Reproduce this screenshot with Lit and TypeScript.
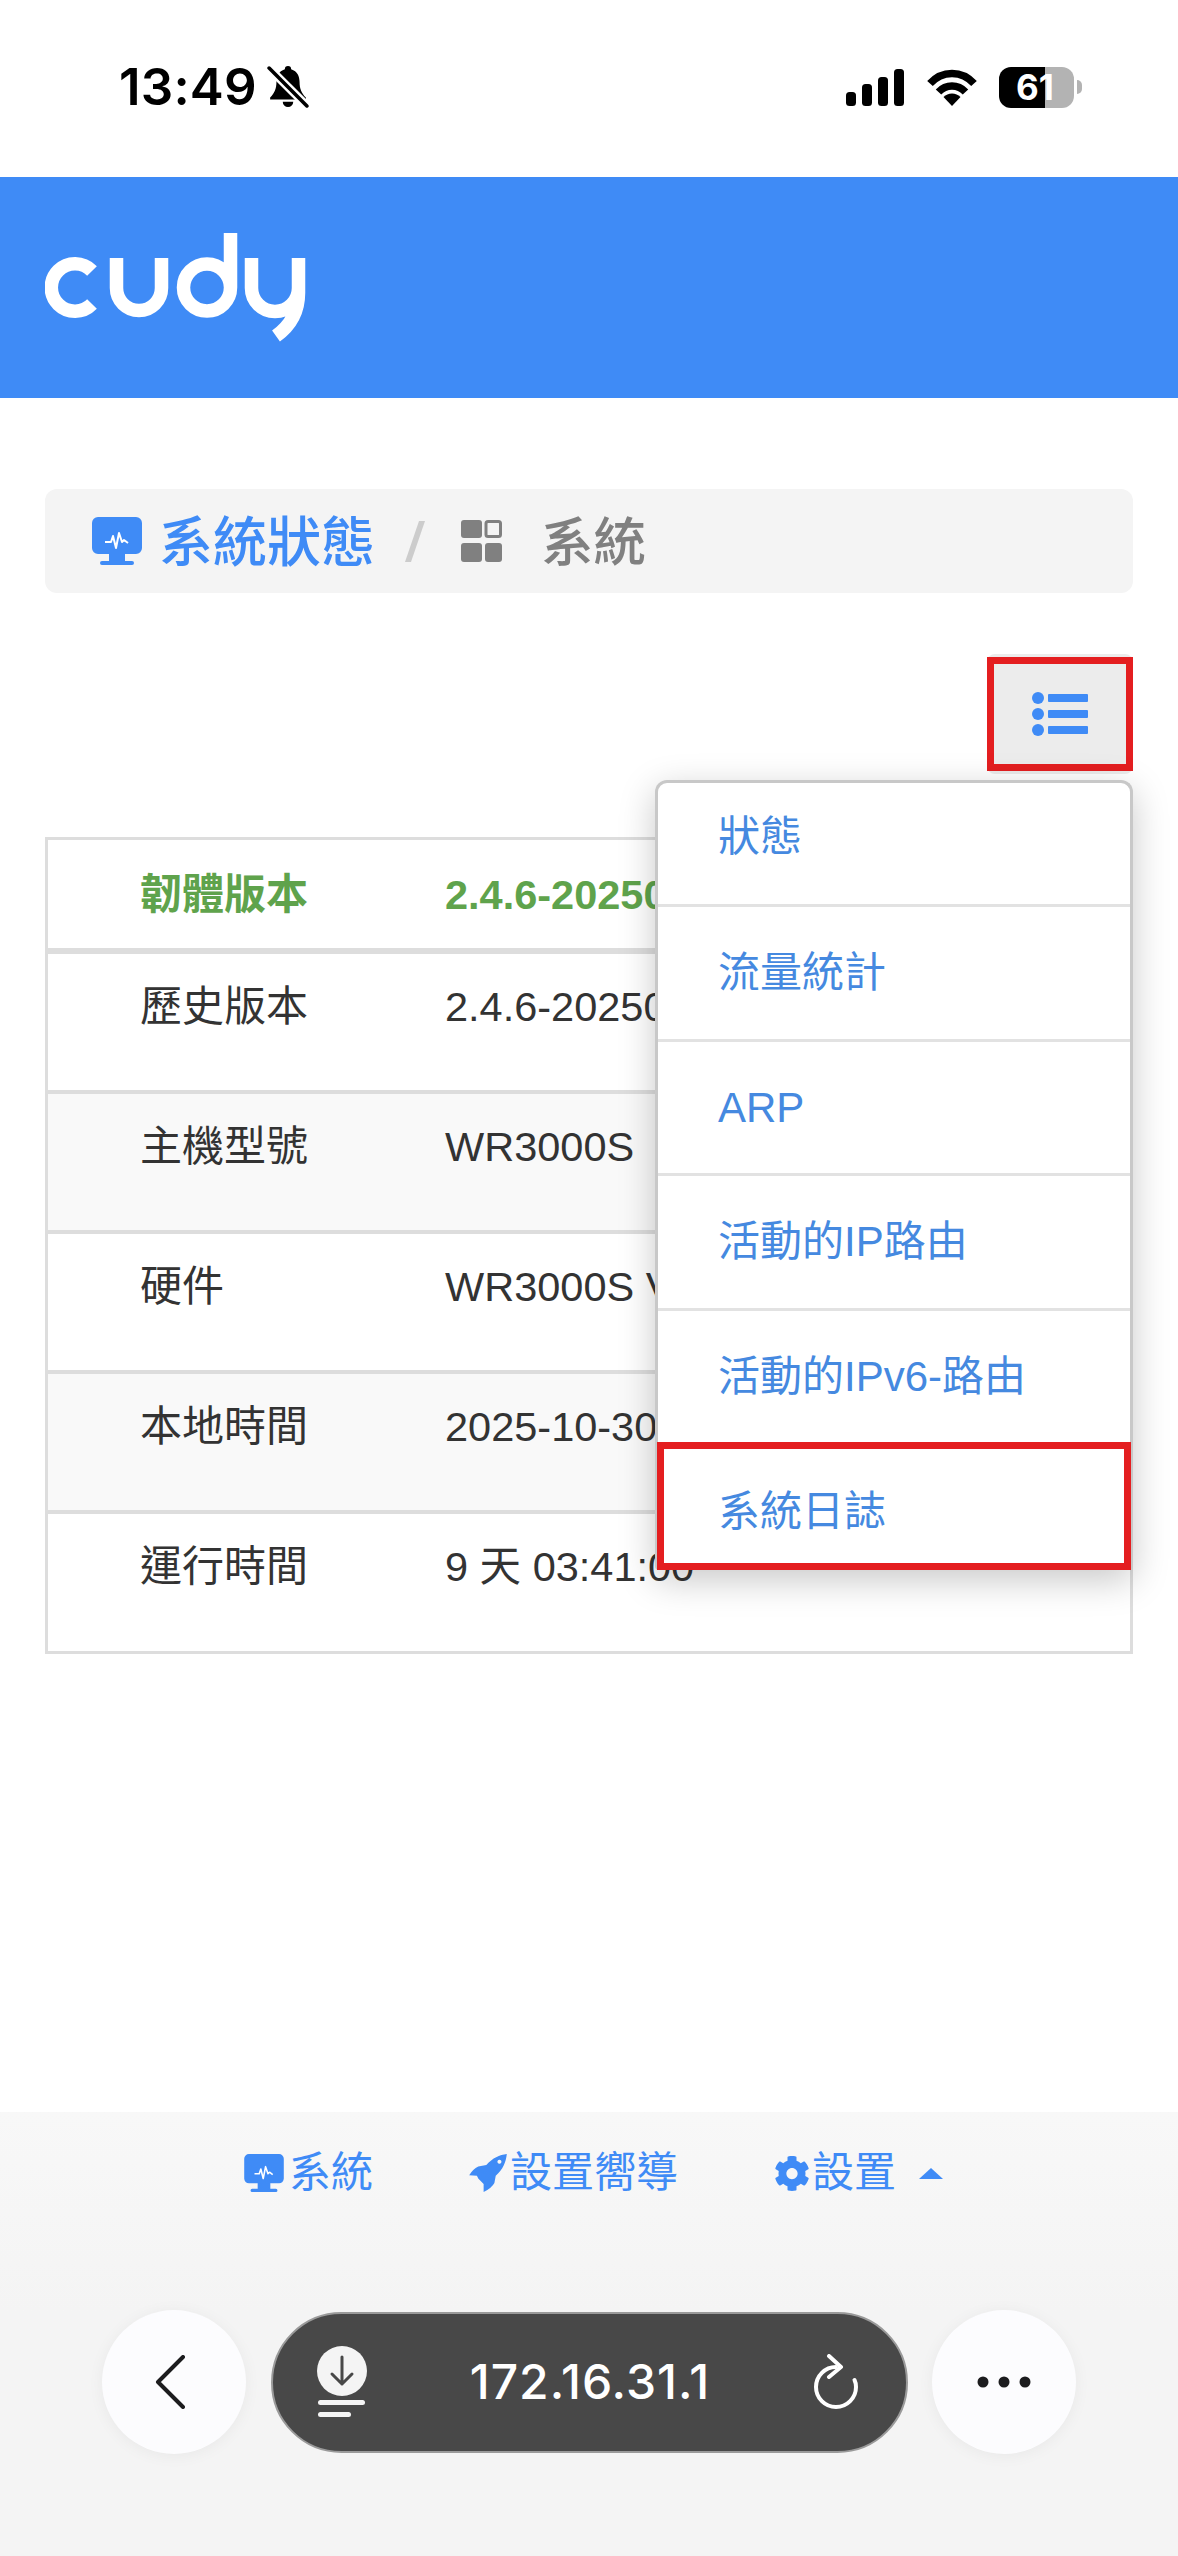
import { LitElement, html, css, svg } from "lit";
import { customElement } from "lit/decorators.js";

const rows: [string, string, string][] = [
  ["韌體版本", "2.4.6-20250", "first"],
  ["歷史版本", "2.4.6-20250", ""],
  ["主機型號", "WR3000S", "alt"],
  ["硬件", "WR3000S V", ""],
  ["本地時間", "2025-10-30", "alt"],
  ["運行時間", "9 天 03:41:00", ""],
];
const menu = ["狀態", "流量統計", "ARP", "活動的IP路由", "活動的IPv6-路由", "系統日誌"];

const monitor = svg`
  <path fill="currentColor" d="M6 0h38a6 6 0 0 1 6 6v25a6 6 0 0 1-6 6H33v7h7a2 2 0 0 1 0 4H10a2 2 0 0 1 0-4h7v-7H6a6 6 0 0 1-6-6V6a6 6 0 0 1 6-6z"/>
  <path fill="none" stroke="#fff" stroke-width="2" stroke-linejoin="round" d="M13 25h6l2-6 3 12 3-15 3 9 2-2 4 3"/>`;
const rocket = "M137 27C115 30 95 38 76 60L52 64Q36 72 25 90L48 92L52 100L68 116L68 140Q92 128 100 113L104 92C126 72 134 52 137 27ZM115 44a6 6 0 1 0 .01 0Z";
const cog = "M487.4 315.7l-42.6-24.6c4.3-23.2 4.3-47 0-70.2l42.6-24.6c4.9-2.8 7.1-8.6 5.5-14-11.1-35.6-30-67.8-54.7-94.6-3.8-4.1-10-5.1-14.8-2.3L380.8 110c-17.9-15.4-38.5-27.3-60.8-35.1V25.8c0-5.6-3.9-10.5-9.4-11.7-36.7-8.2-74.3-7.8-109.2 0-5.5 1.2-9.4 6.1-9.4 11.7V75c-22.2 7.9-42.8 19.8-60.8 35.1L88.7 85.5c-4.9-2.8-11-1.9-14.8 2.3-24.7 26.7-43.6 58.9-54.7 94.6-1.7 5.4.6 11.2 5.5 14L67.3 221c-4.3 23.2-4.3 47 0 70.2l-42.6 24.6c-4.9 2.8-7.1 8.6-5.5 14 11.1 35.6 30 67.8 54.7 94.6 3.8 4.1 10 5.1 14.8 2.3l42.6-24.6c17.9 15.4 38.5 27.3 60.8 35.1v49.2c0 5.6 3.9 10.5 9.4 11.7 36.7 8.2 74.3 7.8 109.2 0 5.5-1.2 9.4-6.1 9.4-11.7v-49.2c22.2-7.9 42.8-19.8 60.8-35.1l42.6 24.6c4.9 2.8 11 1.9 14.8-2.3 24.7-26.7 43.6-58.9 54.7-94.6 1.5-5.5-.7-11.3-5.6-14.1zM256 336c-44.1 0-80-35.9-80-80s35.9-80 80-80 80 35.9 80 80-35.9 80-80 80z";

@customElement("app-root")
export class AppRoot extends LitElement {
  static styles = css`
    :host {
      display: flex;
      flex-direction: column;
      width: 1178px;
      height: 2556px;
      overflow: hidden;
      background: #fff;
      color: #333;
      font-family: "Liberation Sans", "Noto Sans CJK TC", sans-serif;
      font-size: 41.5px;
    }
    svg { display: block; flex: none; }
    .status {
      height: 177px;
      box-sizing: border-box;
      display: flex;
      align-items: center;
      padding: 0 96px 3px 119px;
      color: #000;
      font-family: Inter, "Liberation Sans", sans-serif;
    }
    .time { font-size: 51px; font-weight: 600; letter-spacing: 0.2px; line-height: 60px; }
    .bell { margin-left: 10px; }
    .status-right { margin-left: auto; display: flex; align-items: center; }
    .wifi { margin-left: 23px; }
    .battery {
      margin-left: 22px;
      width: 75px;
      height: 41px;
      border-radius: 12px;
      background: linear-gradient(90deg, #000 61%, #b3b3b3 61%);
      color: #fff;
      font-size: 35px;
      font-weight: 700;
      line-height: 41px;
      text-align: left;
      padding-left: 17px;
      box-sizing: border-box;
    }
    .cap { width: 5px; height: 14px; margin-left: 3px; background: #b3b3b3; border-radius: 0 7px 7px 0; }
    .brand {
      height: 221px;
      box-sizing: border-box;
      background: #3f8bf6;
      padding: 56px 0 0 45px;
    }
    .brand svg { filter: blur(0.7px); }
    main { flex: 1; padding: 91px 45px 0; min-height: 0; }
    .crumb {
      height: 104px;
      background: #f4f4f4;
      border-radius: 12px;
      display: flex;
      align-items: center;
      padding: 0 0 0 47px;
      font-size: 54px;
      font-weight: 500;
      line-height: 60px;
      color: #3f8bf6;
    }
    .crumb span { position: relative; top: 2px; }
    .crumb .lead { margin-left: 17px; }
    .slash { width: 20px; margin-left: 30px; color: #ccc; }
    .squares { margin-left: 36px; color: #808080; }
    .crumb .sys { margin-left: 39px; font-size: 52.5px; color: #808080; }
    .toolbar {
      position: relative;
      margin-top: 61px;
      height: 120px;
      display: flex;
      justify-content: flex-end;
    }
    .menu-btn {
      width: 146px;
      height: 120px;
      border-radius: 8px;
      background: #ececec;
      display: flex;
      align-items: center;
      justify-content: center;
      position: relative;
    }
    .mark {
      position: absolute;
      box-sizing: border-box;
      border: 7px solid #e41e20;
      pointer-events: none;
    }
    .mark-btn { left: 0; right: 0; top: 3px; bottom: 3px; }
    .menu {
      position: absolute;
      z-index: 2;
      top: 126px;
      right: 0;
      width: 478px;
      box-sizing: border-box;
      background: #fff;
      border: 3px solid #c8c8c8;
      border-bottom: 0;
      border-radius: 12px 12px 4px 4px;
      box-shadow: 0 10px 36px rgba(0, 0, 0, 0.22);
      color: #4589e0;
      font-size: 42px;
    }
    .item {
      position: relative;
      box-sizing: border-box;
      height: 134.7px;
      padding: 36px 0 0 60px;
      line-height: 60px;
      border-bottom: 3px solid #e2e2e2;
    }
    .item:first-child { height: 124px; padding-top: 24px; }
    .item:last-child { height: 124px; border-bottom: 0; }
    .mark-item { left: -1px; right: -1px; top: -4px; bottom: 0; }
    .table {
      margin-top: 63px;
      border: 3px solid #ddd;
    }
    .row {
      display: grid;
      grid-template-columns: 305px 1fr;
      box-sizing: border-box;
      height: 140px;
      padding: 23px 0 0 92px;
      line-height: 60px;
      border-bottom: 4px solid #ddd;
      white-space: nowrap;
    }
    .row .key { font-size: 42px; }
    .row:last-child { border-bottom: 0; height: 137px; }
    .row.alt { background: #f9f9f9; }
    .row.first {
      height: 114px;
      padding-top: 25px;
      border-bottom-width: 6px;
      color: #5fa34c;
      font-weight: 700;
    }
    footer {
      height: 444px;
      box-sizing: border-box;
      background: linear-gradient(#f8f8f8, #f4f4f4 45%);
      color: #3f8bf6;
    }
    nav {
      height: 198px;
      box-sizing: border-box;
      display: flex;
      align-items: flex-start;
      padding: 31px 0 0 244px;
      font-size: 42px;
      line-height: 60px;
      gap: 96px;
    }
    .link { display: flex; align-items: center; gap: 5px; }
    .link.rocket { gap: 3px; }
    .link.gear { gap: 2px; }
    .caret {
      margin-left: 21px;
      width: 0;
      height: 0;
      border: 12.5px solid transparent;
      border-top: 0;
      border-bottom: 11px solid #3f8bf6;
    }
    .bar { display: flex; align-items: center; padding-left: 102px; }
    .round {
      width: 144px;
      height: 144px;
      border-radius: 50%;
      background: #fcfcfe;
      box-shadow: 0 2px 16px rgba(0, 0, 0, 0.05);
      display: flex;
      align-items: center;
      justify-content: center;
      flex: none;
    }
    .back svg { margin-right: 8px; }
    .pill {
      width: 637px;
      height: 141px;
      margin: 0 24px 0 25px;
      box-sizing: border-box;
      border-radius: 71px;
      background: #484848;
      border: 2px solid #9a9a9a;
      display: flex;
      align-items: center;
      padding: 0 47px 0 44px;
      color: #fff;
      font-family: Inter, "Liberation Sans", sans-serif;
    }
    .addr { flex: 1; text-align: center; font-size: 48px; font-weight: 500; letter-spacing: 1px; line-height: 60px; }
  `;

  render() {
    return html`
      <div class="status">
        <span class="time">13:49</span>
        <svg class="bell" width="42" height="42" viewBox="0 0 40 40">
          <path fill="#000" d="M20 0a3 3 0 0 1 3 3c6 2 8 7 8 12 0 7 2 11 6 15v2H3v-2c4-4 6-8 6-15 0-5 2-10 8-12a3 3 0 0 1 3-3zM15 34h10a5 5 0 0 1-10 0z"/>
          <path stroke="#fff" stroke-width="8" d="M1 1l38 38"/>
          <path stroke="#000" stroke-width="3.4" stroke-linecap="round" d="M2 2l36 36"/>
        </svg>
        <div class="status-right">
          <svg width="58" height="37" viewBox="0 0 58 37" fill="#000">
            <rect x="0" y="23" width="10" height="14" rx="3.5"/>
            <rect x="16" y="15" width="10" height="22" rx="3.5"/>
            <rect x="32" y="8" width="10" height="29" rx="3.5"/>
            <rect x="48" y="0" width="10" height="37" rx="3.5"/>
          </svg>
          <svg class="wifi" width="50" height="37" viewBox="0 0 50 37">
            <path fill="none" stroke="#000" stroke-width="7.5" d="M3 14.500C15 1 35 1 47 14.500M11.500 23C19 15 31 15 38.500 23"/>
            <path fill="#000" d="M25 37l-8.500-9a12 12 0 0 1 17 0z"/>
          </svg>
          <div class="battery">61</div>
          <div class="cap"></div>
        </div>
      </div>

      <div class="brand">
        <svg width="262" height="110" viewBox="0 0 262 110" fill="none" stroke="#fff" stroke-width="13.500">
          <path d="M47 38A23.700 23.700 0 1 0 47 71"/>
          <path d="M71.500 25V55A22.500 22.500 0 0 0 116.500 55V25"/>
          <path d="M185.500 0V54.500A23.500 23.500 0 1 1 138.500 54.500A23.500 23.500 0 1 1 185.500 54.500"/>
          <path d="M206.500 25V55A23.500 23.500 0 0 0 253.500 55M253.500 25V60C253.500 80 245 93 231 103"/>
        </svg>
      </div>

      <main>
        <div class="crumb">
          <svg width="50" height="48" viewBox="0 0 50 48">${monitor}</svg>
          <span class="lead">系統狀態</span>
          <svg class="slash" width="20" height="41" viewBox="0 0 20 41"><path fill="currentColor" d="M14 0h6L6 41H0z"/></svg>
          <svg class="squares" width="41" height="42" viewBox="0 0 41 42" fill="currentColor">
            <rect width="21" height="18" rx="3"/>
            <rect x="25" y="1.500" width="14.500" height="15" rx="2" fill="none" stroke="currentColor" stroke-width="3"/>
            <rect y="23" width="21" height="19" rx="3"/>
            <rect x="24" y="23" width="17" height="19" rx="3"/>
          </svg>
          <span class="sys">系統</span>
        </div>

        <div class="toolbar">
          <div class="menu-btn">
            <svg width="56" height="44" viewBox="0 0 56 44" fill="#3f8bf6">
              <circle cx="6" cy="6" r="6"/><circle cx="6" cy="22" r="6"/><circle cx="6" cy="38" r="6"/>
              <rect x="16" y="2" width="40" height="8" rx="1"/>
              <rect x="16" y="18" width="40" height="8" rx="1"/>
              <rect x="16" y="34" width="40" height="8" rx="1"/>
            </svg>
            <div class="mark mark-btn"></div>
          </div>
          <div class="menu">
            ${menu.map(
              (m, i) => html`<div class="item">
                ${m}${i === menu.length - 1 ? html`<div class="mark mark-item"></div>` : ""}
              </div>`
            )}
          </div>
        </div>

        <div class="table">
          ${rows.map(
            ([k, v, c]) => html`<div class="row ${c}"><span class="key">${k}</span><span>${v}</span></div>`
          )}
        </div>
      </main>

      <footer>
        <nav>
          <div class="link">
            <svg width="40" height="38" viewBox="0 0 50 48">${monitor}</svg><span>系統</span>
          </div>
          <div class="link rocket">
            <svg width="38" height="38" viewBox="25 27 112 113"><path fill="currentColor" fill-rule="evenodd" d=${rocket}/></svg><span>設置嚮導</span>
          </div>
          <div class="link gear">
            <svg width="36" height="37" viewBox="0 0 512 512"><path fill="currentColor" d=${cog}/></svg><span>設置</span><div class="caret"></div>
          </div>
        </nav>
        <div class="bar">
          <div class="round back">
            <svg width="31" height="54" viewBox="0 0 31 54" fill="none" stroke="#1c1c1e" stroke-width="4" stroke-linecap="round" stroke-linejoin="round">
              <path d="M28 2L3 27l25 25"/>
            </svg>
          </div>
          <div class="pill">
            <svg width="50" height="72" viewBox="0 0 50 72">
              <circle cx="25" cy="25" r="25" fill="#f4f4f4"/>
              <path fill="none" stroke="#484848" stroke-width="3" stroke-linecap="round" stroke-linejoin="round" d="M25 11v27M15 28l10 10 10-10"/>
              <rect x="1" y="54" width="47" height="5" rx="2.500" fill="#f4f4f4"/>
              <rect x="1" y="66" width="33" height="5" rx="2.500" fill="#f4f4f4"/>
            </svg>
            <span class="addr">172.16.31.1</span>
            <svg width="46" height="56" viewBox="0 0 46 56" fill="none" stroke="#fff" stroke-width="4" stroke-linecap="round" stroke-linejoin="round">
              <path d="M23 13A20 20 0 1 0 43 33c0-3-.5-5-1.500-7"/>
              <path d="M16 2l12 11-12 10"/>
            </svg>
          </div>
          <div class="round">
            <svg width="54" height="12" viewBox="0 0 54 12" fill="#1c1c1e">
              <circle cx="6" cy="6" r="5.500"/><circle cx="27" cy="6" r="5.500"/><circle cx="48" cy="6" r="5.500"/>
            </svg>
          </div>
        </div>
      </footer>
    `;
  }
}
